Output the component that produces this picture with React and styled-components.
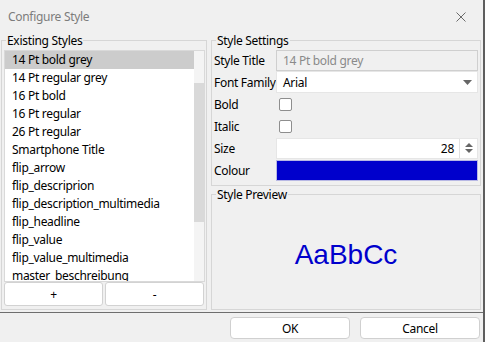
import React from "react";
import styled, { createGlobalStyle } from "styled-components";

const GlobalStyle = createGlobalStyle`
  html, body { margin: 0; padding: 0; background: #f0f0f0; }
  body { font-family: "Noto Sans", "Open Sans", sans-serif; font-size: 12px; color: #000; letter-spacing: -0.3px; }
  * { box-sizing: border-box; }
`;

const Window = styled.div`
  width: 485px;
  height: 342px;
  background: #f0f0f0;
  border-right: 2px solid #5e5e5e;
  display: flex;
  flex-direction: column;
  overflow: hidden;
`;

const TitleBar = styled.div`
  height: 33px;
  display: flex;
  align-items: center;
  justify-content: space-between;
  padding: 0 17px 0 8px;
  flex-shrink: 0;
`;

const Title = styled.span`
  color: #7c7c7c;
  font-size: 12px;
  line-height: 1;
  margin-top: 1px;
`;

const CloseButton = styled.div`
  width: 10px;
  height: 10px;
  display: flex;
  margin-top: 1px;
`;

const Body = styled.div`
  height: 279px;
  display: flex;
  gap: 4px;
  padding: 0 2px 2px 1px;
  flex-shrink: 0;
`;

const Group = styled.fieldset`
  margin: 0;
  padding: 0;
  min-width: 0;
  border: 1px solid #d6d6d6;
  display: flex;
  flex-direction: column;
  width: ${(p) => p.$width || "auto"};
  height: ${(p) => p.$height || "auto"};
  flex: ${(p) => p.$flex || "none"};
`;

const Legend = styled.legend`
  margin-left: 4px;
  padding: 0 1px;
  font-size: 12px;
  line-height: 15px;
  color: #000;
`;

const LeftInner = styled.div`
  flex: 1;
  display: flex;
  flex-direction: column;
  padding: 2px 1px 3px 2px;
  min-height: 0;
`;

const ListBox = styled.div`
  flex: 1;
  display: flex;
  border: 1px solid #d9d9d9;
  background: #fff;
  min-height: 0;
  overflow: hidden;
`;

const List = styled.div`
  flex: 1;
  overflow: hidden;
`;

const Row = styled.div`
  height: 18px;
  line-height: 18px;
  padding-left: 7px;
  white-space: nowrap;
  background: ${(p) => (p.$selected ? "#cccccc" : "transparent")};
`;

const ScrollBar = styled.div`
  width: 10px;
  background: #f4f4f4;
  display: flex;
  flex-direction: column;
`;

const Thumb = styled.div`
  margin-top: 32px;
  height: 139px;
  background: #d9d9d9;
`;

const ButtonRow = styled.div`
  display: flex;
  gap: 2px;
  height: 24px;
  margin-right: 1px;
`;

const SmallButton = styled.div`
  flex: 1;
  background: #fff;
  border: 1px solid #d2d2d2;
  border-radius: 3px;
  display: flex;
  align-items: center;
  justify-content: center;
  font-size: 12px;
`;

const RightColumn = styled.div`
  width: 270px;
  display: flex;
  flex-direction: column;
  gap: 1px;
`;

const Form = styled.div`
  display: grid;
  grid-template-columns: 62px 1fr;
  grid-auto-rows: 22px;
  padding: 1px 2px 4px 2px;
`;

const Label = styled.div`
  display: flex;
  align-items: center;
  white-space: nowrap;
  font-size: 12px;
`;

const Field = styled.div`
  display: flex;
  align-items: center;
`;

const TextBox = styled.div`
  flex: 1;
  height: ${(p) => p.$h || 21}px;
  display: flex;
  align-items: center;
  padding: 0 0 0 6px;
  background: ${(p) => (p.$disabled ? "#f0f0f0" : "#fff")};
  border: 1px solid ${(p) => (p.$disabled ? "#cfcfcf" : "#e6e6e6")};
  color: ${(p) => (p.$disabled ? "#8a8a8a" : "#000")};
  font-size: 12px;
`;

const BoxText = styled.span`
  flex: 1;
  text-align: ${(p) => p.$align || "left"};
  padding-right: ${(p) => (p.$align === "right" ? "5px" : "0")};
`;

const Arrow = styled.div`
  width: 20px;
  height: 100%;
  display: flex;
  align-items: center;
  justify-content: center;
`;

const SpinArrows = styled.div`
  width: 18px;
  height: 100%;
  border-left: 1px solid #e0e0e0;
  display: flex;
  flex-direction: column;
  align-items: center;
  justify-content: center;
  gap: 2px;
`;

const CheckBox = styled.div`
  width: 13px;
  height: 13px;
  margin-left: 3px;
  background: #fff;
  border: 1px solid #8e8e8e;
  border-radius: 2px;
`;

const Swatch = styled.div`
  flex: 1;
  height: 21px;
  background: ${(p) => p.$color};
  border: 1px solid #b8b8e4;
`;

const Preview = styled.div`
  flex: 1;
  display: flex;
  align-items: center;
  justify-content: center;
  padding-bottom: 2px;
`;

const PreviewText = styled.span`
  font-family: "Liberation Sans", Arial, sans-serif;
  font-size: 28px;
  letter-spacing: 0;
  color: #0000cc;
`;

const Footer = styled.div`
  flex: 1;
  border-top: 1px solid #6e6e6e;
  display: flex;
  justify-content: flex-end;
  align-items: flex-start;
  gap: 10px;
  padding: 4px 3px 0 0;
`;

const DialogButton = styled.div`
  width: 120px;
  height: 22px;
  background: #fff;
  border: 1px solid #d0d0d0;
  border-radius: 4px;
  display: flex;
  align-items: center;
  justify-content: center;
  font-size: 12px;
`;

const styles = [
  "14 Pt bold grey",
  "14 Pt regular grey",
  "16 Pt bold",
  "16 Pt regular",
  "26 Pt regular",
  "Smartphone Title",
  "flip_arrow",
  "flip_descriprion",
  "flip_description_multimedia",
  "flip_headline",
  "flip_value",
  "flip_value_multimedia",
  "master_beschreibung",
];

export default function App() {
  return (
    <>
      <GlobalStyle />
      <Window>
        <TitleBar>
          <Title>Configure Style</Title>
          <CloseButton>
            <svg width="10" height="10" viewBox="0 0 10 10">
              <path d="M0.5 0.5 L9.5 9.5 M9.5 0.5 L0.5 9.5" stroke="#6a6a6a" strokeWidth="1" />
            </svg>
          </CloseButton>
        </TitleBar>
        <Body>
          <Group $width="206px" $height="277px">
            <Legend>Existing Styles</Legend>
            <LeftInner>
              <ListBox>
                <List>
                  {styles.map((s, i) => (
                    <Row key={s} $selected={i === 0}>{s}</Row>
                  ))}
                </List>
                <ScrollBar>
                  <Thumb />
                </ScrollBar>
              </ListBox>
              <ButtonRow>
                <SmallButton>+</SmallButton>
                <SmallButton>-</SmallButton>
              </ButtonRow>
            </LeftInner>
          </Group>
          <RightColumn>
            <Group $height="153px">
              <Legend>Style Settings</Legend>
              <Form>
                <Label>Style Title</Label>
                <Field>
                  <TextBox $disabled><BoxText>14 Pt bold grey</BoxText></TextBox>
                </Field>
                <Label>Font Family</Label>
                <Field>
                  <TextBox $h={22}>
                    <BoxText>Arial</BoxText>
                    <Arrow>
                      <svg width="9" height="5" viewBox="0 0 9 5">
                        <path d="M0 0 L9 0 L4.5 5 Z" fill="#666" />
                      </svg>
                    </Arrow>
                  </TextBox>
                </Field>
                <Label>Bold</Label>
                <Field><CheckBox /></Field>
                <Label>Italic</Label>
                <Field><CheckBox /></Field>
                <Label>Size</Label>
                <Field>
                  <TextBox>
                    <BoxText $align="right">28</BoxText>
                    <SpinArrows>
                      <svg width="8" height="4" viewBox="0 0 8 4">
                        <path d="M0 4 L8 4 L4 0 Z" fill="#666" />
                      </svg>
                      <svg width="8" height="4" viewBox="0 0 8 4">
                        <path d="M0 0 L8 0 L4 4 Z" fill="#666" />
                      </svg>
                    </SpinArrows>
                  </TextBox>
                </Field>
                <Label>Colour</Label>
                <Field><Swatch $color="#0000cc" /></Field>
              </Form>
            </Group>
            <Group $flex="1">
              <Legend>Style Preview</Legend>
              <Preview>
                <PreviewText>AaBbCc</PreviewText>
              </Preview>
            </Group>
          </RightColumn>
        </Body>
        <Footer>
          <DialogButton>OK</DialogButton>
          <DialogButton>Cancel</DialogButton>
        </Footer>
      </Window>
    </>
  );
}
